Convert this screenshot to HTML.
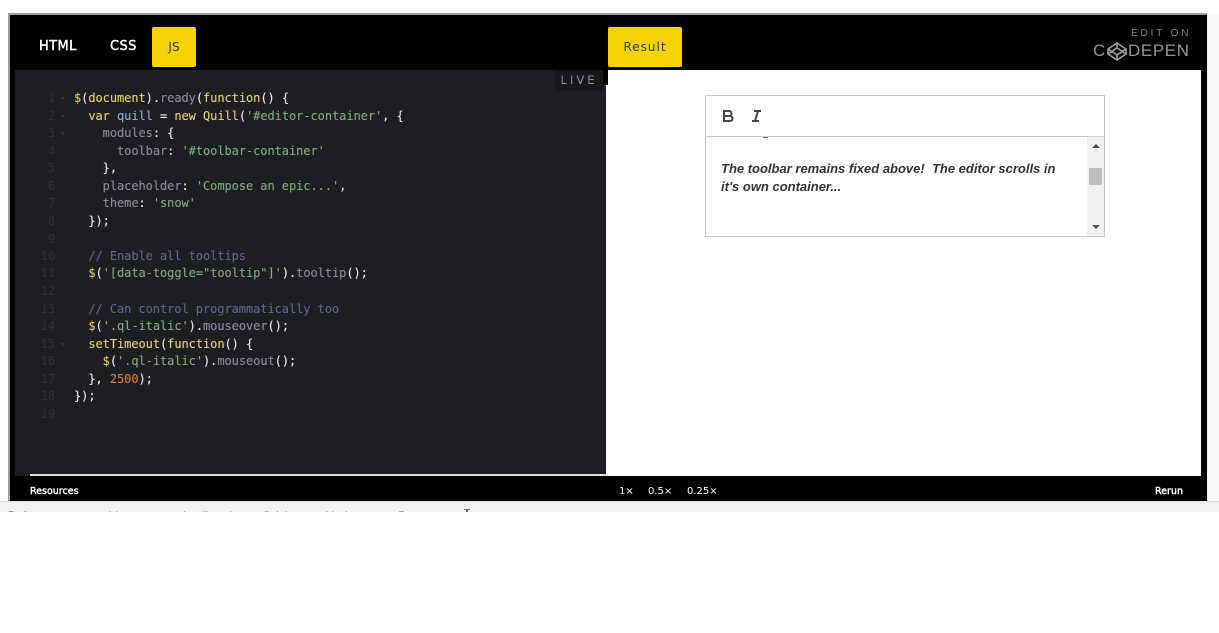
<!DOCTYPE html>
<html><head><meta charset="utf-8"><style>
html,body{margin:0;padding:0;width:1219px;height:512px;overflow:hidden;background:#fff;font-family:"Liberation Sans",sans-serif}
div,span.a{position:absolute}
#code{left:0;top:0;font:12px/17.58px "DejaVu Sans Mono","Liberation Mono",monospace;color:#e6e8ee;white-space:pre;letter-spacing:-.06px;-webkit-text-stroke:.12px currentColor}
.l{position:absolute;left:74px;white-space:pre}
.n{position:absolute;width:25px;left:30px;text-align:right;color:#2f3138;white-space:pre}
.f{position:absolute;left:61px;width:0;height:0;border-left:2.5px solid transparent;border-right:2.5px solid transparent;border-top:3.5px solid #34363e}
.y{color:#e8c56f}.k{color:#e6d078}.p{color:#8f8aa6}.b{color:#8eabd2}.s{color:#84aa80}.c{color:#5f688a}.o{color:#de7a34}.w{color:#f0f2f6}
.m{color:#93869f}
.tab{font:13px "DejaVu Sans","Liberation Sans",sans-serif;color:#fff;top:40px;line-height:14px;letter-spacing:.4px;-webkit-text-stroke:.4px #fff}
.btn{background:#f4d300;border-radius:2px;color:#3a3a1a;font:12px "DejaVu Sans","Liberation Sans",sans-serif;text-align:center}
.bot{top:486px;font:9.5px/12px "DejaVu Sans","Liberation Sans",sans-serif;color:#fff;white-space:pre;-webkit-text-stroke:.4px #fff}
.bot2{top:486px;font:10px/12px "DejaVu Sans","Liberation Sans",sans-serif;color:#fff;white-space:pre}
</style></head><body>
<div style="left:0;top:501px;width:1219px;height:11px;background:#f0f1f3;border-top:1px solid #dcdcdc;box-sizing:border-box"></div>
<div style="left:1207px;top:14px;width:12px;height:487px;background:#f8f8f9"></div>
<div style="left:8px;top:13px;width:1199px;height:488px;background:#000;border-top:2px solid #a0a0a0;border-left:2px solid #a0a0a0;box-sizing:border-box"></div>

<div class="tab" style="left:39px">HTML</div>
<div class="tab" style="left:110px">CSS</div>
<div class="btn" style="left:152px;top:27px;width:44px;height:40px;line-height:40px">JS</div>
<div class="btn" style="left:608px;top:27px;width:74px;height:40px;line-height:40px;letter-spacing:1px">Result</div>

<div style="left:1131px;top:28px;font:10px/12px 'Liberation Sans',sans-serif;letter-spacing:2.85px;color:#808080;white-space:pre">EDIT ON</div>
<div style="left:1093px;top:42px;font:17px/18px 'Liberation Sans',sans-serif;color:#969696;white-space:pre">C</div>
<svg style="position:absolute;left:1106px;top:41px" width="22" height="20" viewBox="0 0 22 20" fill="none" stroke="#a0a0a0" stroke-width="1.6"><path d="M11 2 20 8v5l-9 6-9-6V8zM11 2v5M2 8l9 6 9-6M2 13l9-6 9 6M11 14v5"/></svg>
<div style="left:1128px;top:42px;font:17px/18px 'Liberation Sans',sans-serif;letter-spacing:.6px;color:#969696;white-space:pre">DEPEN</div>

<div style="left:15px;top:70px;width:591px;height:406px;background:#1d1e22"></div>
<div style="left:30px;top:474px;width:576px;height:2px;background:#e0e0e0"></div>
<div style="left:606px;top:70px;width:595px;height:406px;background:#fff"></div>
<div style="left:555px;top:70px;width:53px;height:15px;background:#000"></div>
<div style="left:555px;top:70px;width:48px;height:21px;background:#17181b;color:#8b8d94;font:11.5px/20px 'DejaVu Sans','Liberation Sans',sans-serif;letter-spacing:3px;text-align:center">LIVE</div>

<div id="code">
<span class="n" style="top:90px">1</span><span class="f" style="top:97px"></span>
<span class="l" style="top:90px"><span class="y">$</span>(<span class="k">document</span>).<span class="m">ready</span>(<span class="k">function</span>() {</span>
<span class="n" style="top:108px">2</span><span class="f" style="top:115px"></span>
<span class="l" style="top:108px">  <span class="k">var</span> <span class="b">quill</span> = <span class="k">new</span> <span class="k">Quill</span>(<span class="s">'#editor-container'</span>, {</span>
<span class="n" style="top:125px">3</span><span class="f" style="top:132px"></span>
<span class="l" style="top:125px">    <span class="m">modules</span>: {</span>
<span class="n" style="top:143px">4</span>
<span class="l" style="top:143px">      <span class="m">toolbar</span>: <span class="s">'#toolbar-container'</span></span>
<span class="n" style="top:160px">5</span>
<span class="l" style="top:160px">    },</span>
<span class="n" style="top:178px">6</span>
<span class="l" style="top:178px">    <span class="m">placeholder</span>: <span class="s">'Compose an epic...'</span>,</span>
<span class="n" style="top:195px">7</span>
<span class="l" style="top:195px">    <span class="m">theme</span>: <span class="s">'snow'</span></span>
<span class="n" style="top:213px">8</span>
<span class="l" style="top:213px">  });</span>
<span class="n" style="top:231px">9</span>
<span class="n" style="top:248px">10</span>
<span class="l c" style="top:248px">  // Enable all tooltips</span>
<span class="n" style="top:265px">11</span>
<span class="l" style="top:265px">  <span class="y">$</span>(<span class="s">'[data-toggle="tooltip"]'</span>).<span class="m">tooltip</span>();</span>
<span class="n" style="top:283px">12</span>
<span class="n" style="top:301px">13</span>
<span class="l c" style="top:301px">  // Can control programmatically too</span>
<span class="n" style="top:318px">14</span>
<span class="l" style="top:318px">  <span class="y">$</span>(<span class="s">'.ql-italic'</span>).<span class="m">mouseover</span>();</span>
<span class="n" style="top:336px">15</span><span class="f" style="top:343px"></span>
<span class="l" style="top:336px">  <span class="k">setTimeout</span>(<span class="k">function</span>() {</span>
<span class="n" style="top:353px">16</span>
<span class="l" style="top:353px">    <span class="y">$</span>(<span class="s">'.ql-italic'</span>).<span class="m">mouseout</span>();</span>
<span class="n" style="top:371px">17</span>
<span class="l" style="top:371px">  }, <span class="o">2500</span>);</span>
<span class="n" style="top:388px">18</span>
<span class="l" style="top:388px">});</span>
<span class="n" style="top:406px">19</span>
</div>

<div style="left:705px;top:95px;width:400px;height:142px;border:1px solid #ccc;box-sizing:border-box;background:#fff"></div>
<div style="left:706px;top:136px;width:398px;height:1px;background:#ccc"></div>
<svg style="position:absolute;left:721px;top:108px" width="46" height="16" viewBox="0 0 46 16" fill="none" stroke="#444" stroke-width="2"><path d="M3 3h5a2.500 2.500 0 0 1 0 5H3zM3 8h6a2.500 2.500 0 0 1 0 5H3z"/><path d="M33 3h7M31 13h7M37 3l-3 10"/></svg>
<div style="left:763px;top:137px;width:5px;height:1px;background:#777"></div>
<div style="left:721px;top:160px;width:350px;font:italic bold 13px/18px 'Liberation Sans',sans-serif;color:#333">The toolbar remains fixed above!&nbsp; The editor scrolls in it's own container...</div>
<div style="left:1087px;top:137px;width:17px;height:99px;background:#f0f0f0"></div>
<div style="left:1089px;top:168px;width:13px;height:17px;background:#bdbdbd"></div>
<div style="left:1092px;top:144px;width:0;height:0;border-left:4px solid transparent;border-right:4px solid transparent;border-bottom:4px solid #505050"></div>
<div style="left:1092px;top:225px;width:0;height:0;border-left:4px solid transparent;border-right:4px solid transparent;border-top:4px solid #505050"></div>

<div class="bot" style="left:30px">Resources</div>
<div class="bot2" style="left:619px">1×</div>
<div class="bot2" style="left:648px">0.5×</div>
<div class="bot2" style="left:687px">0.25×</div>
<div class="bot" style="left:1155px">Rerun</div>

<div style="left:8px;top:506px;width:450px;height:6px;overflow:hidden"><div style="left:0;top:3px;font:12px/14px 'Liberation Sans',sans-serif;color:#444;white-space:pre;word-spacing:2px">Before you can add your own details, please finish your Update your Bootstrap</div></div>
<div style="left:464px;top:509px;width:6px;height:1px;background:#666"></div>
<div style="left:466px;top:509px;width:2px;height:3px;background:#666"></div>
</body></html>
